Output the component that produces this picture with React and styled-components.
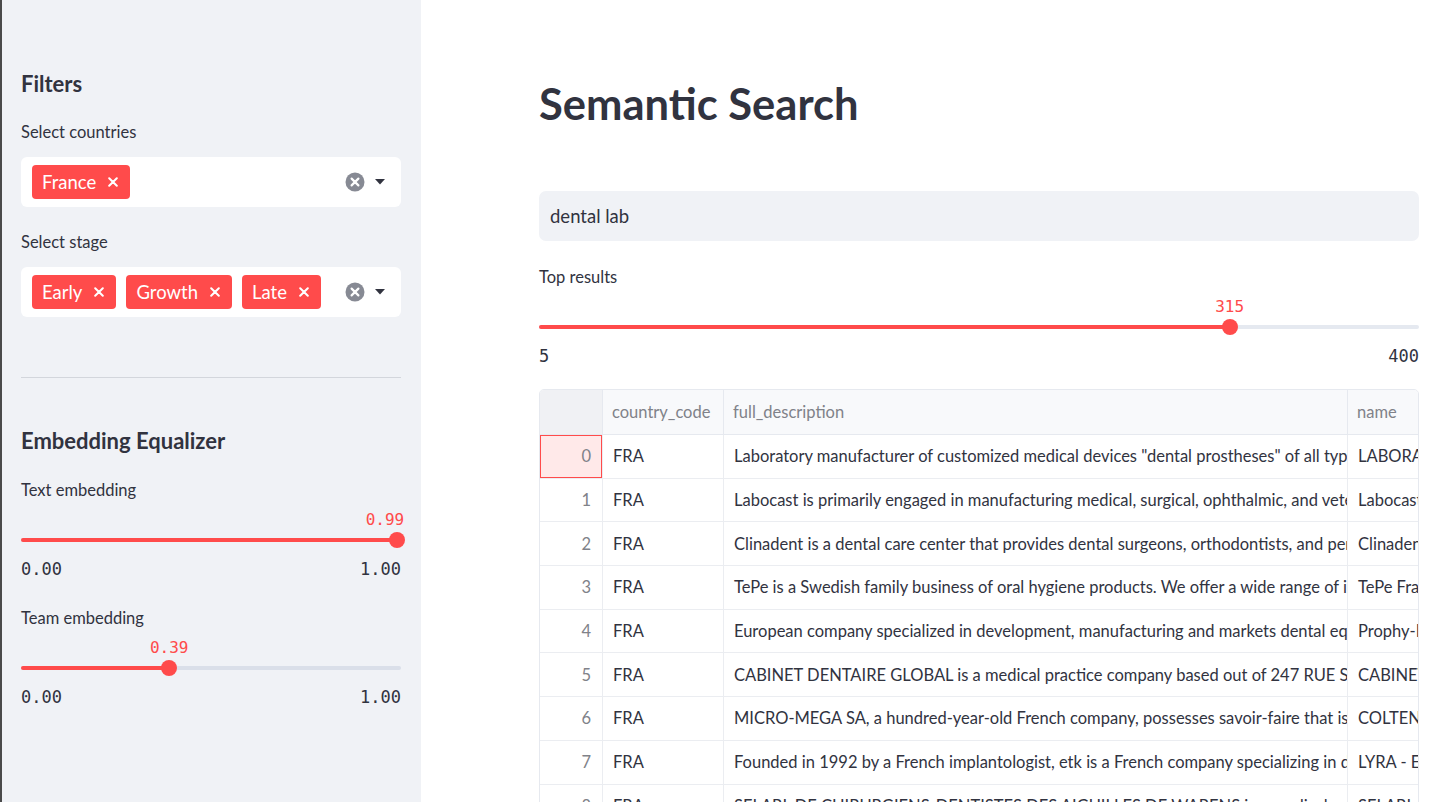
import React from 'react';
import styled, { createGlobalStyle } from 'styled-components';

const GlobalStyle = createGlobalStyle`
  html, body {
    margin: 0;
    padding: 0;
    background: #ffffff;
  }
  * {
    box-sizing: border-box;
  }
`;

const rows = [
  {
    code: 'FRA',
    desc: 'Laboratory manufacturer of customized medical devices "dental prostheses" of all types for dental surgeons and orthodontists',
    name: 'LABORATOIRE DENTAIRE',
  },
  {
    code: 'FRA',
    desc: 'Labocast is primarily engaged in manufacturing medical, surgical, ophthalmic, and veterinary instruments and apparatus',
    name: 'Labocast',
  },
  {
    code: 'FRA',
    desc: 'Clinadent is a dental care center that provides dental surgeons, orthodontists, and periodontists with a complete platform',
    name: 'Clinadent',
  },
  {
    code: 'FRA',
    desc: 'TePe is a Swedish family business of oral hygiene products. We offer a wide range of interdental brushes and toothbrushes',
    name: 'TePe France',
  },
  {
    code: 'FRA',
    desc: 'European company specialized in development, manufacturing and markets dental equipment and consumables',
    name: 'Prophy-Dent',
  },
  {
    code: 'FRA',
    desc: 'CABINET DENTAIRE GLOBAL is a medical practice company based out of 247 RUE SOLFERINO, LILLE, France',
    name: 'CABINET DENTAIRE GLOBAL',
  },
  {
    code: 'FRA',
    desc: 'MICRO-MEGA SA, a hundred-year-old French company, possesses savoir-faire that is recognized worldwide in endodontics',
    name: 'COLTENE MICRO-MEGA',
  },
  {
    code: 'FRA',
    desc: 'Founded in 1992 by a French implantologist, etk is a French company specializing in dental implants and prosthetics',
    name: 'LYRA - Etk',
  },
  {
    code: 'FRA',
    desc: 'SELARL DE CHIRURGIENS-DENTISTES DES AIGUILLES DE WARENS is a medical practice company based out of France',
    name: 'SELARL DE CHIRURGIENS',
  },
];

function ClearIcon() {
  return (
    <svg width="20" height="20" viewBox="0 0 20 20">
      <circle cx="10" cy="10" r="9.5" fill="#878a94" />
      <path d="M6.6 6.6 L13.4 13.4 M13.4 6.6 L6.6 13.4" stroke="#fff" strokeWidth="2.2" strokeLinecap="round" />
    </svg>
  );
}

function CaretIcon() {
  return (
    <svg width="10" height="6" viewBox="0 0 10 6">
      <path d="M0 0 L10 0 L5 5.5 Z" fill="#31333f" />
    </svg>
  );
}

function TagClose() {
  return (
    <svg width="10" height="10" viewBox="0 0 10 10">
      <path d="M1.2 1.2 L8.8 8.8 M8.8 1.2 L1.2 8.8" stroke="#fff" strokeWidth="2" strokeLinecap="round" />
    </svg>
  );
}

function MultiSelect({ label, options, gap }) {
  return (
    <Field $gap={gap}>
      <FieldLabel>{label}</FieldLabel>
      <SelectBox>
        <Tags>
          {options.map((o) => (
            <Tag key={o}>
              {o}
              <TagClose />
            </Tag>
          ))}
        </Tags>
        <SelectIcons>
          <ClearIcon />
          <CaretIcon />
        </SelectIcons>
      </SelectBox>
    </Field>
  );
}

function Slider({ label, value, min, max, format, gap }) {
  const pct = ((value - min) / (max - min)) * 100;
  const nearEnd = pct > 92;
  return (
    <Field $gap={gap}>
      <FieldLabel>{label}</FieldLabel>
      <SliderArea>
        <ThumbValue
          style={
            nearEnd
              ? { right: `calc(${100 - pct}% - 7px)` }
              : { left: `${pct}%`, transform: 'translateX(-50%)' }
          }
        >
          {format(value)}
        </ThumbValue>
        <Track>
          <TrackFill style={{ width: `${pct}%` }} />
          <Thumb style={{ left: `${pct}%` }} />
        </Track>
      </SliderArea>
      <Ticks>
        <span>{format(min)}</span>
        <span>{format(max)}</span>
      </Ticks>
    </Field>
  );
}

export default function App() {
  return (
    <>
      <GlobalStyle />
      <Page>
        <Sidebar>
          <SideHeading>Filters</SideHeading>
          <MultiSelect label="Select countries" options={['France']} gap={24} />
          <MultiSelect label="Select stage" options={['Early', 'Growth', 'Late']} gap={25} />
          <Divider />
          <SideHeading $top={49}>Embedding Equalizer</SideHeading>
          <Slider label="Text embedding" value={0.99} min={0} max={1} format={(v) => v.toFixed(2)} gap={25} />
          <Slider label="Team embedding" value={0.39} min={0} max={1} format={(v) => v.toFixed(2)} gap={30} />
        </Sidebar>
        <Main>
          <Title>Semantic Search</Title>
          <SearchInput>dental lab</SearchInput>
          <Slider label="Top results" value={315} min={5} max={400} format={(v) => String(v)} gap={26} />
          <Table>
            <HeaderRow>
              <IndexHead />
              <HeadCell>country_code</HeadCell>
              <HeadCell>full_description</HeadCell>
              <HeadCell $last>name</HeadCell>
            </HeaderRow>
            {rows.map((r, i) => (
              <Row key={i}>
                <IndexCell $selected={i === 0}>{i}</IndexCell>
                <Cell>{r.code}</Cell>
                <Cell>{r.desc}</Cell>
                <Cell $last>{r.name}</Cell>
              </Row>
            ))}
          </Table>
        </Main>
      </Page>
    </>
  );
}

const Page = styled.div`
  display: flex;
  height: 100vh;
  overflow: hidden;
  font-family: 'Source Sans Pro', Lato, 'Noto Sans', sans-serif;
  color: #31333f;
`;

const Sidebar = styled.aside`
  width: 421px;
  flex-shrink: 0;
  background: #f0f2f6;
  border-left: 2px solid #4a4a4a;
  padding: 70px 20px 0 19px;
  display: flex;
  flex-direction: column;
`;

const SideHeading = styled.h2`
  margin: ${(p) => p.$top || 0}px 0 0;
  font-size: 22px;
  font-weight: 700;
  line-height: 28px;
`;

const Field = styled.div`
  flex-shrink: 0;
  margin-top: ${(p) => p.$gap}px;
  display: flex;
  flex-direction: column;
`;

const FieldLabel = styled.label`
  font-size: 16.5px;
  line-height: 20px;
  height: 20px;
`;

const SelectBox = styled.div`
  margin-top: 15px;
  height: 50px;
  background: #ffffff;
  border-radius: 6px;
  display: flex;
  align-items: center;
  padding: 0 16px 0 11px;
`;

const Tags = styled.div`
  flex: 1;
  display: flex;
  gap: 10px;
`;

const Tag = styled.span`
  height: 34px;
  background: #ff4b4b;
  color: #ffffff;
  border-radius: 4px;
  display: inline-flex;
  align-items: center;
  gap: 12px;
  padding: 0 12px 0 10px;
  font-size: 18.5px;
`;

const SelectIcons = styled.div`
  display: flex;
  align-items: center;
  gap: 10px;
`;

const Divider = styled.hr`
  margin: 60px 0 0;
  border: none;
  border-top: 1px solid #d3d6dc;
`;

const SliderArea = styled.div`
  position: relative;
  margin-top: 11px;
  padding-top: 21px;
`;

const ThumbValue = styled.span`
  position: absolute;
  top: 0;
  font-family: 'DejaVu Sans Mono', 'Liberation Mono', monospace;
  font-size: 16px;
  line-height: 18px;
  color: #ff4b4b;
  white-space: nowrap;
`;

const Track = styled.div`
  position: relative;
  height: 16px;
  display: flex;
  align-items: center;
  &::before {
    content: '';
    position: absolute;
    left: 0;
    right: 0;
    top: 6px;
    height: 4px;
    border-radius: 4px;
    background: rgba(151, 166, 195, 0.25);
  }
`;

const TrackFill = styled.div`
  position: relative;
  height: 4px;
  border-radius: 4px;
  background: #ff4b4b;
`;

const Thumb = styled.div`
  position: absolute;
  top: 0;
  width: 16px;
  height: 16px;
  margin-left: -8px;
  border-radius: 50%;
  background: #ff4b4b;
`;

const Ticks = styled.div`
  margin-top: 12px;
  display: flex;
  justify-content: space-between;
  font-family: 'DejaVu Sans Mono', 'Liberation Mono', monospace;
  font-size: 17px;
  line-height: 18px;
  color: #31333f;
`;

const Main = styled.main`
  flex: 1;
  padding: 75px 0 0 118px;
  display: flex;
  flex-direction: column;
  & > * {
    width: 880px;
    flex-shrink: 0;
  }
`;

const Title = styled.h1`
  margin: 0;
  font-size: 43.5px;
  font-weight: 700;
  line-height: 56px;
`;

const SearchInput = styled.div`
  margin-top: 60px;
  height: 50px;
  background: #f0f2f6;
  border-radius: 7px;
  padding: 0 11px;
  display: flex;
  align-items: center;
  font-size: 18.5px;
`;

const Table = styled.div`
  margin-top: 24px;
  border: 1px solid #e6e9ef;
  border-radius: 5px 5px 0 0;
  overflow: hidden;
  font-size: 16.5px;
`;

const gridCols = '63px 121px 624px 1fr';

const HeaderRow = styled.div`
  display: grid;
  grid-template-columns: ${gridCols};
  height: 45px;
  background: #f8f9fb;
  border-bottom: 1px solid #e6e9ef;
`;

const HeadCell = styled.div`
  display: flex;
  align-items: center;
  padding-left: 9px;
  color: #808289;
  white-space: nowrap;
  overflow: hidden;
  border-right: ${(p) => (p.$last ? 'none' : '1px solid #e6e9ef')};
`;

const IndexHead = styled.div`
  background: #f0f1f4;
  border-right: 1px solid #e6e9ef;
`;

const Row = styled.div`
  display: grid;
  grid-template-columns: ${gridCols};
  height: 43.7px;
  border-bottom: 1px solid #ebedf1;
`;

const Cell = styled.div`
  display: flex;
  align-items: center;
  padding-left: 10px;
  white-space: nowrap;
  overflow: hidden;
  color: #31333f;
  border-right: ${(p) => (p.$last ? 'none' : '1px solid #ebedf1')};
`;

const IndexCell = styled.div`
  display: flex;
  align-items: center;
  justify-content: flex-end;
  padding-right: 11px;
  color: #808289;
  border-right: 1px solid #ebedf1;
  background: ${(p) => (p.$selected ? '#ffe9e9' : '#ffffff')};
  box-shadow: ${(p) => (p.$selected ? 'inset 0 0 0 1px #ff4b4b' : 'none')};
`;
